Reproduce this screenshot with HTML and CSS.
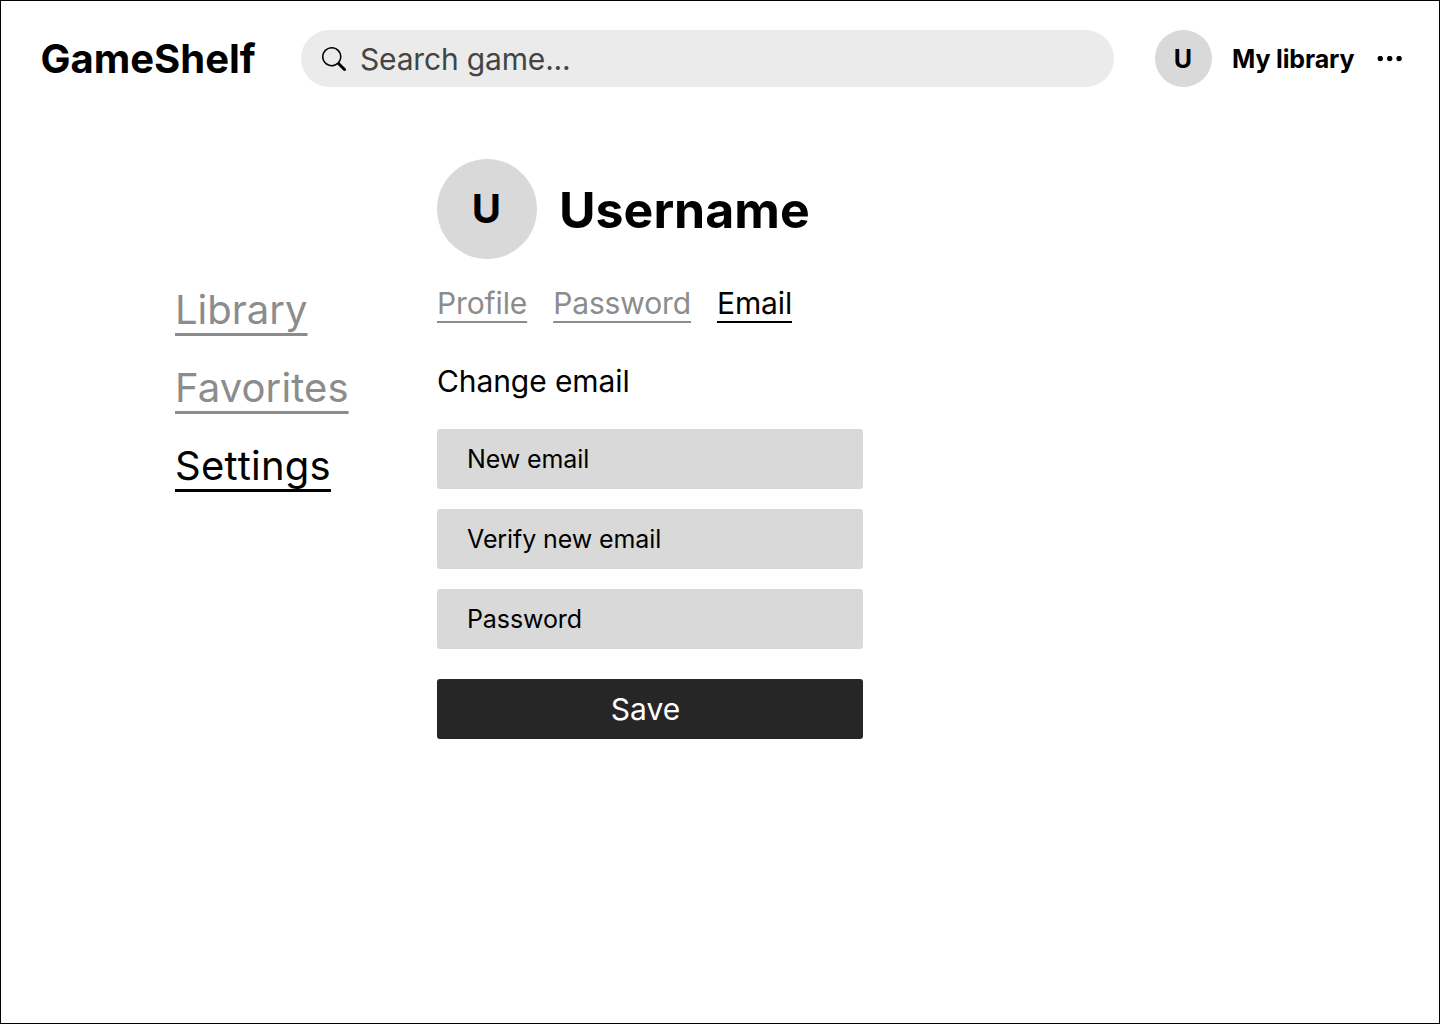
FILE: index.html
```html
<!DOCTYPE html>
<html lang="en">
<head>
<meta charset="utf-8">
<title>GameShelf</title>
<link rel="stylesheet" href="styles.css">
</head>
<body>
<div class="page">
  <header class="topbar">
    <a class="brand">GameShelf</a>
    <div class="search">
      <svg class="search-icon" viewBox="0 0 16 16" fill="currentColor"><path d="M11.742 10.344a6.500 6.500 0 1 0-1.397 1.398h-.001c.03.04.062.078.098.115l3.850 3.850a1 1 0 0 0 1.415-1.414l-3.850-3.850a1.007 1.007 0 0 0-.115-.100zM12 6.500a5.500 5.500 0 1 1-11 0 5.500 5.500 0 0 1 11 0z"/></svg>
      <span class="search-text">Search game...</span>
    </div>
    <div class="avatar avatar-small">U</div>
    <a class="my-library">My library</a>
    <svg class="dots" viewBox="0 0 26 6"><circle cx="3.300" cy="2.500" r="2.700"/><circle cx="12.700" cy="2.500" r="2.700"/><circle cx="22.100" cy="2.500" r="2.700"/></svg>
  </header>
  <main class="content">
    <nav class="sidebar">
      <a class="link">Library</a>
      <a class="link favorites">Favorites</a>
      <a class="link active">Settings</a>
    </nav>
    <section class="account">
      <div class="identity">
        <div class="avatar avatar-large">U</div>
        <h1 class="username">Username</h1>
      </div>
      <nav class="tabs">
        <a class="link">Profile</a>
        <a class="link">Password</a>
        <a class="link active">Email</a>
      </nav>
      <h2 class="title">Change email</h2>
      <form class="form">
        <div class="field">New email</div>
        <div class="field">Verify new email</div>
        <div class="field">Password</div>
        <div class="save">Save</div>
      </form>
    </section>
  </main>
</div>
</body>
</html>
```
FILE: styles.css
```css
* { box-sizing: border-box; }
body { margin: 0; font-family: Inter, sans-serif; color: #000; background: #fff; }
.page { width: 1440px; height: 1024px; border: 1px solid #000; }
.topbar { display: flex; align-items: center; height: 57px; margin-top: 29px; padding-left: 39px; }
.brand { width: 261px; padding-left: 0.5px; font-size: 40px; font-weight: 700; line-height: 48px; white-space: nowrap; }
.search { display: flex; align-items: center; width: 813px; height: 57px; padding-left: 21px; border-radius: 29px; background: #ebebeb; }
.search-icon { width: 24px; height: 24px; margin-right: 14px; }
.search-text { font-size: 30px; line-height: 36px; letter-spacing: -0.17px; color: #444; }
.avatar { display: flex; align-items: center; justify-content: center; flex: none; border-radius: 50%; background: #d9d9d9; font-weight: 700; }
.avatar-small { width: 57px; height: 57px; margin-left: 41px; padding-right: 1px; font-size: 25px; }
.my-library { width: 145px; margin-left: 20px; font-size: 25px; font-weight: 700; letter-spacing: -0.14px; white-space: nowrap; }
.dots { width: 26px; height: 6px; }
.content { display: flex; padding: 72px 0 0 174px; }
.sidebar { display: flex; flex-direction: column; align-items: flex-start; gap: 30px; width: 262px; padding-top: 127px; font-size: 40px; line-height: 48px; }
.link { color: #8c8c8c; text-decoration: underline; text-decoration-thickness: 2px; text-underline-offset: 7px; text-decoration-skip-ink: none; }
.sidebar .link { text-decoration-thickness: 2.5px; text-underline-offset: 9px; }
.link.active { color: #000; }
.sidebar .favorites { letter-spacing: 0.1px; }
.sidebar .active { font-kerning: none; letter-spacing: 0.23px; }
.account { width: 426px; }
.identity { display: flex; align-items: center; gap: 22px; }
.avatar-large { width: 100px; height: 100px; padding: 0 1px 2px 0; font-size: 40px; }
.username { margin: 0; padding-top: 2px; font-size: 50px; font-weight: 700; line-height: 60px; }
.tabs { display: flex; gap: 26px; margin-top: 26px; font-size: 30px; line-height: 36px; letter-spacing: -0.13px; }
.title { margin: 42px 0 0; font-size: 30px; font-weight: 400; line-height: 36px; letter-spacing: -0.09px; }
.form { display: flex; flex-direction: column; gap: 20px; margin-top: 30px; }
.field { height: 60px; padding-left: 30px; border-radius: 3px; background: #d9d9d9; font-size: 25px; line-height: 60px; letter-spacing: -0.1px; }
.save { height: 60px; margin-top: 10px; padding-right: 9px; border-radius: 3px; background: #262626; color: #fff; font-size: 30px; line-height: 60px; text-align: center; }
```
